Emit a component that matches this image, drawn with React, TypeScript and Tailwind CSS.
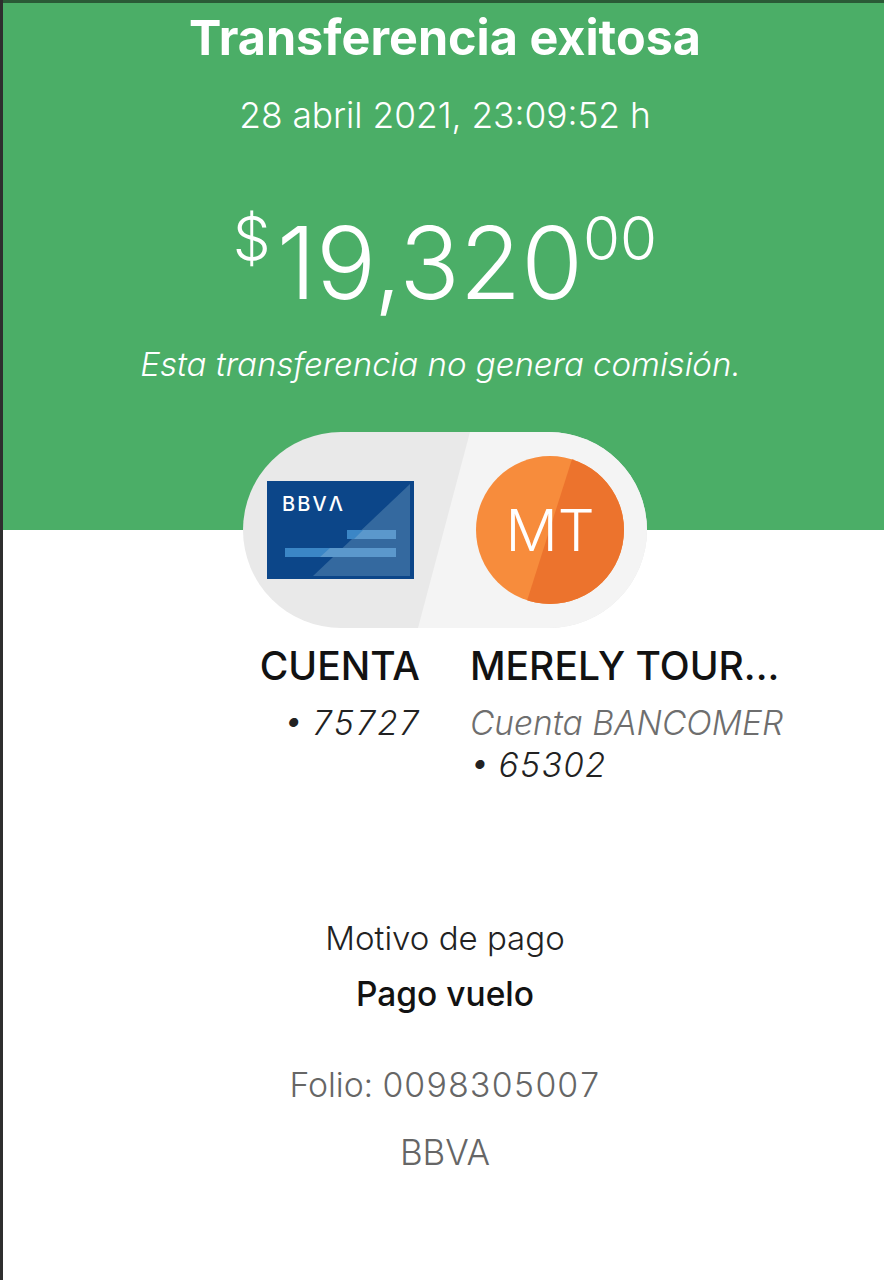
export default function App() {
  return (
    <div className="w-[884px] h-[1280px] bg-white flex overflow-hidden font-['Inter',sans-serif] text-[#121212]">
      <div className="w-[3px] shrink-0 bg-[#2e2e2e]" />
      <div className="flex-1 flex flex-col min-w-0">
        <div className="h-[3px] shrink-0 bg-[#2a5a36]" />
        <header className="h-[527px] shrink-0 bg-[#4bae67] flex flex-col items-center text-white pl-[3px]">
          <h1 className="mt-[8px] text-[48.5px] leading-[54px] font-bold">Transferencia exitosa</h1>
          <p className="mt-[29px] text-[35.3px] leading-[44px] font-light">28 abril 2021, 23:09:52 h</p>
          <div className="mt-[73px] flex items-start font-light h-[104px]">
            <span className="text-[60px] leading-[60px] mt-[-3px] mr-[6px]">$</span>
            <span className="text-[100px] leading-[104px]">19,320</span>
            <span className="text-[60px] leading-[60px] mt-[-3px]">00</span>
          </div>
          <p className="mt-[27px] mr-[9px] text-[33px] leading-[44px] font-light italic">Esta transferencia no genera comisión.</p>
        </header>
        <div className="relative z-10 -mt-[98px] ml-[240px] w-[404px] h-[196px] rounded-full bg-[#e9e9e9] overflow-hidden flex items-center justify-between shrink-0 pl-[24px] pr-[23px]">
          <div className="absolute inset-0 bg-[#f4f4f4] [clip-path:polygon(227px_0,404px_0,404px_196px,175px_196px)]" />
          <svg className="relative" width="147" height="98" viewBox="0 0 147 98" aria-hidden="true">
            <rect width="147" height="98" fill="#0c4689" />
            <path d="M46 95 L143 3 V95 Z" fill="#34699f" />
            <rect x="80" y="49" width="49" height="9" fill="#3b86c6" />
            <rect x="18" y="67" width="111" height="9" fill="#3b86c6" />
            <path d="M96 49 H129 V58 H87 Z M63 67 H129 V76 H53 Z" fill="#5b98cc" />
            <text x="15" y="30" fill="#ffffff" fontFamily="Inter, sans-serif" fontSize="20" fontWeight="500" textLength="61">BBVΛ</text>
          </svg>
          <div className="relative w-[148px] h-[148px] rounded-full bg-[#f78c3c] overflow-hidden flex items-center justify-center">
            <div className="absolute inset-0 bg-[#ec732d] [clip-path:polygon(97px_0,148px_0,148px_148px,50px_148px)]" />
            <span className="relative text-white text-[58px] leading-none font-light">MT</span>
          </div>
        </div>
        <div className="mt-[14px] flex gap-[51px] shrink-0">
          <div className="w-[417px] flex flex-col items-end">
            <div className="text-[39px] leading-[48px] font-medium">CUENTA</div>
            <div className="mt-[12px] text-[33.5px] leading-[42px] font-light italic text-[#222] tabular-nums">• 75727</div>
          </div>
          <div className="flex flex-col -ml-[1px]">
            <div className="text-[39px] leading-[48px] font-medium">MERELY TOUR...</div>
            <div className="mt-[12px] text-[33.5px] leading-[42px] font-light italic text-[#6e6e6e]">Cuenta BANCOMER</div>
            <div className="text-[33.5px] leading-[42px] font-light italic text-[#222] tabular-nums">• 65302</div>
          </div>
        </div>
        <div className="mt-[130px] flex flex-col items-center shrink-0 pl-[3px]">
          <p className="text-[33px] leading-[44px] font-light text-[#222]">Motivo de pago</p>
          <p className="mt-[12px] text-[33.5px] leading-[44px] font-medium">Pago vuelo</p>
          <p className="mt-[47px] text-[33.8px] leading-[44px] font-light text-[#666] tabular-nums">Folio: 0098305007</p>
          <p className="mt-[23px] text-[35px] leading-[44px] font-light text-[#666]">BBVA</p>
        </div>
      </div>
    </div>
  );
}
